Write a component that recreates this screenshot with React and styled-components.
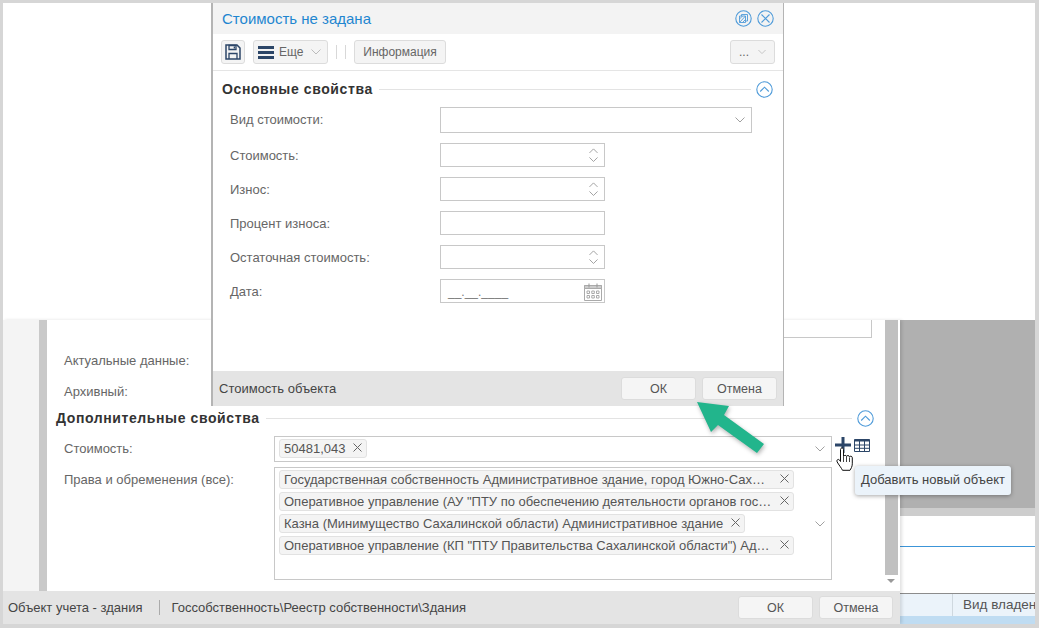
import styled, { createGlobalStyle } from "styled-components";

const GlobalStyle = createGlobalStyle`
  html, body {
    margin: 0;
    padding: 0;
    background: #fff;
  }
  body {
    font-family: "Liberation Sans", Arial, sans-serif;
    font-size: 13px;
    color: #555;
  }
`;

const Frame = styled.div`
  position: relative;
  box-sizing: border-box;
  width: 1039px;
  height: 628px;
  overflow: hidden;
  background: #fff;
  border: solid #d6d6d6;
  border-width: 3px 4px 4px 3px;
`;

const TopBlank = styled.div`
  height: 317px;
`;

const Lower = styled.div`
  display: flex;
  height: 304px;
`;

const LeftPane = styled.div`
  position: relative;
  z-index: 1;
  display: flex;
  flex-direction: column;
  width: 897px;
  box-shadow: 2px 0 3px rgba(0, 0, 0, 0.12);
`;

const PaneBody = styled.div`
  display: flex;
  flex: 1;
  min-height: 0;
`;

const Gutter = styled.div`
  width: 36px;
  background: #f4f4f4;
`;

const Band = styled.div`
  width: 8px;
  background: #c9c9c9;
`;

const Form = styled.div`
  flex: 1;
  background: #fff;
`;

const ClippedBox = styled.div`
  box-sizing: border-box;
  width: 598px;
  height: 18px;
  margin-left: 227px;
  border: solid #c8c8c8;
  border-width: 0 1px 1px 0;
`;

const PlainRow = styled.div`
  height: ${(p) => p.$h}px;
  margin-top: ${(p) => p.$top || 0}px;
  padding-left: 17px;
  line-height: ${(p) => p.$line || p.$h}px;
  color: #666;
`;

const SectionHead = styled.div`
  display: flex;
  align-items: center;
  height: 24px;
  padding: 0 ${(p) => p.$right}px 0 ${(p) => p.$left}px;
`;

const SectionTitle = styled.span`
  font-size: 14px;
  font-weight: bold;
  letter-spacing: 0.6px;
  color: #333;
  white-space: nowrap;
`;

const SectionLine = styled.span`
  flex: 1;
  height: 1px;
  margin: 0 5px 0 6px;
  background: #e3e3e3;
`;

const FieldRow = styled.div`
  display: flex;
  margin-top: ${(p) => p.$top}px;
`;

const FieldLabel = styled.div`
  width: 210px;
  padding: ${(p) => p.$pad}px 0 0 17px;
  color: #666;
`;

const TagBox = styled.div`
  position: relative;
  box-sizing: border-box;
  width: 558px;
  height: ${(p) => p.$h}px;
  padding: ${(p) => p.$pad}px 4px;
  border: 1px solid #c8c8c8;
  background: #fff;
`;

const Tag = styled.div`
  display: flex;
  align-items: center;
  justify-content: space-between;
  box-sizing: border-box;
  width: ${(p) => p.$w}px;
  height: 19px;
  margin-bottom: 3px;
  padding: 0 4px;
  background: #f4f4f4;
  border: 1px solid #e2e2e2;
  border-radius: 3px;
  color: #555;
  white-space: nowrap;
  svg {
    flex: none;
    margin-top: -3px;
  }
`;

const BoxChevron = styled.span`
  position: absolute;
  right: 6px;
  top: ${(p) => p.$top}px;
  line-height: 0;
`;

const Tools = styled.div`
  display: flex;
  gap: 3px;
  margin: 1px 0 0 3px;
  align-items: flex-start;
`;

const TableSlot = styled.span`
  margin-top: 2px;
`;

const Scrollbar = styled.div`
  position: relative;
  width: 16px;
  background: #fff;
`;

const Thumb = styled.div`
  width: 13px;
  height: 255px;
  margin-left: 1px;
  background: #c0c0c0;
`;

const ScrollArrow = styled.div`
  position: absolute;
  left: 3px;
  top: 259px;
  width: 0;
  height: 0;
  border: 4px solid transparent;
  border-top: 4px solid #999;
`;

const Footer = styled.div`
  display: flex;
  align-items: center;
  justify-content: space-between;
  flex: none;
  height: ${(p) => p.$h}px;
  padding: 0 ${(p) => p.$right}px 0 ${(p) => p.$left}px;
  background: #e4e4e4;
  color: #444;
`;

const FooterText = styled.div`
  display: flex;
  align-items: center;
`;

const FooterDivider = styled.span`
  width: 1px;
  height: 15px;
  margin: 0 12px 0 16px;
  background: #aaa;
`;

const FooterButtons = styled.div`
  display: flex;
  gap: 6px;
`;

const Button = styled.button`
  box-sizing: border-box;
  width: ${(p) => p.$w}px;
  height: 23px;
  padding: 0;
  font: inherit;
  font-size: 12.5px;
  color: #555;
  background: #f5f5f5;
  border: 1px solid #dcdcdc;
  border-radius: 3px;
`;

const RightPane = styled.div`
  flex: 1;
  display: flex;
  flex-direction: column;
  min-width: 0;
`;

const GrayArea = styled.div`
  height: 188px;
  background: #b0b0b0;
`;

const Splitter = styled.div`
  height: 8px;
  background: #cdcdcd;
`;

const GridTop = styled.div`
  height: 30px;
  background: #fff;
  border-bottom: 1px solid #3c95d8;
`;

const GridGap = styled.div`
  height: 46px;
  background: #fff;
  border-bottom: 1px solid #8c8c8c;
`;

const GridHead = styled.div`
  display: flex;
  height: 22px;
  background: #ebf3fa;
`;

const GridCell = styled.div`
  width: ${(p) => p.$w}px;
  flex: none;
  padding-left: 10px;
  box-sizing: border-box;
  line-height: 21px;
  font-size: 13.5px;
  color: #555;
  white-space: nowrap;
  border-right: ${(p) => (p.$edge ? "1px solid #cfd8df" : "none")};
`;

const GridSelected = styled.div`
  flex: 1;
  background: #bfdcf2;
`;

const Modal = styled.div`
  position: absolute;
  z-index: 2;
  left: 208px;
  top: 0;
  box-sizing: border-box;
  display: flex;
  flex-direction: column;
  width: 573px;
  height: 403px;
  background: #fff;
  border: solid #b4b4b4;
  border-width: 0 1px 0 2px;
`;

const TitleBar = styled.div`
  display: flex;
  align-items: center;
  justify-content: space-between;
  height: 31px;
  padding: 0 9px;
  background: #f3f3f3;
`;

const Title = styled.div`
  font-size: 15px;
  color: #1f86d0;
`;

const TitleIcons = styled.div`
  display: flex;
  gap: 5px;
  line-height: 0;
`;

const Toolbar = styled.div`
  display: flex;
  align-items: center;
  height: 36px;
  padding: 0 8px;
  border-bottom: 1px solid #e5e5e5;
`;

const ToolButton = styled.div`
  display: flex;
  align-items: center;
  justify-content: ${(p) => (p.$center ? "center" : "flex-start")};
  gap: ${(p) => p.$gap || 0}px;
  box-sizing: border-box;
  width: ${(p) => p.$w}px;
  height: 24px;
  margin-left: ${(p) => p.$ml || 0}px;
  padding: 0 ${(p) => p.$pad || 0}px;
  background: #f4f4f4;
  border: 1px solid #dcdcdc;
  border-radius: 3px;
  font-size: 12px;
  color: #666;
`;

const ToolChevron = styled.span`
  margin-left: 3px;
  line-height: 0;
`;

const ToolDivider = styled.span`
  width: 1px;
  height: 14px;
  margin-left: ${(p) => p.$ml}px;
  background: #d8d8d8;
`;

const Spacer = styled.div`
  flex: 1;
`;

const ModalBody = styled.div`
  flex: 1;
  padding-top: 6px;
`;

const ModalRow = styled.div`
  display: flex;
  align-items: center;
  height: ${(p) => p.$h || 24}px;
  margin-top: ${(p) => p.$top}px;
  padding-left: 17px;
`;

const ModalLabel = styled.div`
  width: 210px;
  padding-bottom: ${(p) => p.$lift || 0}px;
  color: #666;
`;

const Input = styled.div`
  position: relative;
  box-sizing: border-box;
  width: ${(p) => p.$w}px;
  height: ${(p) => p.$h || 24}px;
  padding-left: 7px;
  border: 1px solid #c8c8c8;
  background: #fff;
  color: #777;
  line-height: 25px;
  font-size: 12px;
`;

const Stepper = styled.span`
  position: absolute;
  right: 6px;
  top: 4px;
  display: flex;
  flex-direction: column;
  gap: 4px;
  line-height: 0;
`;

const CalendarSlot = styled.span`
  position: absolute;
  right: 2px;
  top: 3px;
  line-height: 0;
`;

const Arrow = styled.svg`
  position: absolute;
  z-index: 3;
  left: 690px;
  top: 394px;
  filter: drop-shadow(1px 2px 2px rgba(0, 0, 0, 0.3));
`;

const Cursor = styled.svg`
  position: absolute;
  z-index: 4;
  left: 833px;
  top: 444px;
`;

const Tip = styled.div`
  position: absolute;
  z-index: 4;
  left: 852px;
  top: 463px;
  box-sizing: border-box;
  width: 156px;
  height: 29px;
  padding-left: 6px;
  line-height: 28px;
  background: #ebf3fa;
  border-radius: 3px;
  box-shadow: 0 1px 4px rgba(0, 0, 0, 0.35);
  color: #444;
  white-space: nowrap;
`;

const Chevron = ({ up, size = 10, color = "#a0a0a0" }) => (
  <svg width={size} height={size * 0.6} viewBox="0 0 10 6" fill="none">
    <path d={up ? "M.5 5.5 5 1l4.5 4.5" : "M.5.5 5 5 9.5.5"} stroke={color} strokeWidth="1" />
  </svg>
);

const Cross = ({ size = 9 }) => (
  <svg width={size} height={size} viewBox="0 0 9 9" fill="none">
    <path d="M.5.5l8 8M8.5.5l-8 8" stroke="#666" strokeWidth="1" />
  </svg>
);

const CircleUp = () => (
  <svg width="17" height="17" viewBox="0 0 17 17" fill="none">
    <circle cx="8.5" cy="8.5" r="7.7" stroke="#4f9bd9" strokeWidth="1.1" />
    <path d="M4.2 10.5 8.5 6.2l4.3 4.3" stroke="#4f9bd9" strokeWidth="1.1" />
  </svg>
);

const CircleClose = () => (
  <svg width="17" height="17" viewBox="0 0 17 17" fill="none">
    <circle cx="8.5" cy="8.5" r="7.7" stroke="#4f9bd9" strokeWidth="1.1" />
    <path d="M4.5 4.5l8 8M12.5 4.5l-8 8" stroke="#4f9bd9" strokeWidth="1.1" />
  </svg>
);

const CircleWindow = () => (
  <svg width="17" height="17" viewBox="0 0 17 17" fill="none">
    <circle cx="8.5" cy="8.5" r="7.7" stroke="#4f9bd9" strokeWidth="1.1" />
    <path d="M4.5 6h6v6.500h-6zM6.500 6V4.500h6V11h-2M4.500 12.500l6-6.500M4.500 9l3-3M7.500 12.500l3-3" stroke="#4f9bd9" strokeWidth=".9" />
  </svg>
);

const SaveIcon = () => (
  <svg width="16" height="16" viewBox="0 0 16 16" fill="none">
    <path d="M1 1h11l3 3v11H1z" stroke="#2c4668" strokeWidth="1.5" fill="#f4f4f4" />
    <path d="M4 1.500h7v4H4zM4 15V9.500h8V15" stroke="#2c4668" strokeWidth="1.3" />
    <path d="M8.700 2.500H10v2H8.700z" fill="#2c4668" />
  </svg>
);

const MenuIcon = () => (
  <svg width="16" height="13" viewBox="0 0 16 13">
    <path d="M0 0h16v3H0zM0 5h16v3H0zM0 10h16v3H0z" fill="#2c4668" />
  </svg>
);

const PlusIcon = () => (
  <svg width="16" height="16" viewBox="0 0 16 16">
    <path d="M6.500 0h3v6.500H16v3H9.500V16h-3V9.500H0v-3h6.500z" fill="#2c4668" />
  </svg>
);

const TableIcon = () => (
  <svg width="16" height="13" viewBox="0 0 16 13" fill="none">
    <path d="M.5.500h15v12H.5z" stroke="#2c4668" />
    <path d="M.5 1.500h15" stroke="#2c4668" strokeWidth="2" />
    <path d="M.5 6h15M.5 9.300h15M5.500 2v10.500M10.500 2v10.500" stroke="#2c4668" />
  </svg>
);

const CalendarIcon = () => (
  <svg width="18" height="18" viewBox="0 0 18 18" fill="none">
    <path d="M.5 2.500h17v15H.5z" stroke="#aaa" fill="#fff" />
    <path d="M.5 2.500h17v3H.5z" fill="#ccc" stroke="#aaa" />
    <path d="M5 .5v4M13 .5v4" stroke="#999" />
    <path d="M3 8h2.500v2.500H3zM7.800 8h2.500v2.500H7.800zM12.500 8H15v2.500h-2.500zM3 12.500h2.500V15H3zM7.800 12.500h2.500V15H7.800zM12.500 12.500H15V15h-2.500z" stroke="#aaa" />
  </svg>
);

const StepControl = () => (
  <Stepper>
    <Chevron up size={9} color="#999" />
    <Chevron size={9} color="#999" />
  </Stepper>
);

const rights = [
  { w: 515, text: "Государственная собственность Административное здание, город Южно-Сах…" },
  { w: 515, text: "Оперативное управление (АУ \"ПТУ по обеспечению деятельности органов гос…" },
  { w: 466, text: "Казна (Минимущество Сахалинской области) Административное здание" },
  { w: 515, text: "Оперативное управление (КП \"ПТУ Правительства Сахалинской области\") Ад…" },
];

const modalFields = [
  { label: "Стоимость:", step: true },
  { label: "Износ:", step: true },
  { label: "Процент износа:" },
  { label: "Остаточная стоимость:", step: true },
];

export default function App() {
  return (
    <>
      <GlobalStyle />
      <Frame>
        <TopBlank />
        <Lower>
          <LeftPane>
            <PaneBody>
              <Gutter />
              <Band />
              <Form>
                <ClippedBox />
                <PlainRow $h={31} $top={7}>Актуальные данные:</PlainRow>
                <PlainRow $h={30} $line={31}>Архивный:</PlainRow>
                <SectionHead $left={9} $right={10}>
                  <SectionTitle>Дополнительные свойства</SectionTitle>
                  <SectionLine />
                  <CircleUp />
                </SectionHead>
                <FieldRow $top={6}>
                  <FieldLabel $pad={5}>Стоимость:</FieldLabel>
                  <TagBox $h={26} $pad={2}>
                    <Tag $w={88}>
                      <span>50481,043</span>
                      <Cross />
                    </Tag>
                    <BoxChevron $top={9}><Chevron /></BoxChevron>
                  </TagBox>
                  <Tools>
                    <PlusIcon />
                    <TableSlot><TableIcon /></TableSlot>
                  </Tools>
                </FieldRow>
                <FieldRow $top={5}>
                  <FieldLabel $pad={5}>Права и обременения (все):</FieldLabel>
                  <TagBox $h={113} $pad={2}>
                    {rights.map((r) => (
                      <Tag key={r.text} $w={r.w}>
                        <span>{r.text}</span>
                        <Cross />
                      </Tag>
                    ))}
                    <BoxChevron $top={53}><Chevron /></BoxChevron>
                  </TagBox>
                </FieldRow>
              </Form>
              <Scrollbar>
                <Thumb />
                <ScrollArrow />
              </Scrollbar>
            </PaneBody>
            <Footer $h={33} $left={5} $right={7}>
              <FooterText>
                Объект учета - здания
                <FooterDivider />
                Госсобственность\Реестр собственности\Здания
              </FooterText>
              <FooterButtons>
                <Button $w={75}>ОК</Button>
                <Button $w={74}>Отмена</Button>
              </FooterButtons>
            </Footer>
          </LeftPane>
          <RightPane>
            <GrayArea />
            <Splitter />
            <GridTop />
            <GridGap />
            <GridHead>
              <GridCell $w={53} $edge />
              <GridCell $w={85}>Вид владен</GridCell>
            </GridHead>
            <GridSelected />
          </RightPane>
        </Lower>

        <Modal>
          <TitleBar>
            <Title>Стоимость не задана</Title>
            <TitleIcons>
              <CircleWindow />
              <CircleClose />
            </TitleIcons>
          </TitleBar>
          <Toolbar>
            <ToolButton $w={24} $center><SaveIcon /></ToolButton>
            <ToolButton $w={75} $ml={8} $pad={4} $gap={5}>
              <MenuIcon />
              Еще
              <ToolChevron><Chevron color="#bbb" /></ToolChevron>
            </ToolButton>
            <ToolDivider $ml={8} />
            <ToolDivider $ml={8} />
            <ToolButton $w={92} $ml={8} $center>Информация</ToolButton>
            <Spacer />
            <ToolButton $w={45} $pad={8} $gap={9}>
              ...
              <Chevron color="#bbb" />
            </ToolButton>
          </Toolbar>
          <ModalBody>
            <SectionHead $left={9} $right={10}>
              <SectionTitle>Основные свойства</SectionTitle>
              <SectionLine />
              <CircleUp />
            </SectionHead>
            <ModalRow $top={6} $h={26}>
              <ModalLabel $lift={2}>Вид стоимости:</ModalLabel>
              <Input $w={312} $h={26}>
                <BoxChevron $top={9}><Chevron /></BoxChevron>
              </Input>
            </ModalRow>
            {modalFields.map((f) => (
              <ModalRow key={f.label} $top={10}>
                <ModalLabel>{f.label}</ModalLabel>
                <Input $w={165}>{f.step && <StepControl />}</Input>
              </ModalRow>
            ))}
            <ModalRow $top={10}>
              <ModalLabel>Дата:</ModalLabel>
              <Input $w={165}>
                __.__.____
                <CalendarSlot><CalendarIcon /></CalendarSlot>
              </Input>
            </ModalRow>
          </ModalBody>
          <Footer $h={35} $left={6} $right={6}>
            <span>Стоимость объекта</span>
            <FooterButtons>
              <Button $w={75}>ОК</Button>
              <Button $w={75}>Отмена</Button>
            </FooterButtons>
          </Footer>
        </Modal>

        <Arrow width="80" height="60" viewBox="0 0 80 60">
          <path d="M4 5 36 9 31 18 71 47 64 56 25 28 18 35z" fill="#22b58c" />
        </Arrow>

        <Cursor width="20" height="26" viewBox="0 0 20 26">
          <path d="M4.500 2.500c0-2 3-2 3 0v7c.5-1.500 3-1.500 3 0 .3-1.300 2.800-1.300 3 .3.600-1 2.800-.8 2.800 1v6c0 3-1.500 5-2.300 6.500H6.500C5.500 21 2.500 17.500 1.200 15c-1-2 1-3.500 2.300-2l1 1.500z" fill="#fff" stroke="#111" strokeWidth="1" strokeLinejoin="round" />
          <path d="M7.500 10v5M10.500 10v5M13.500 10.500V15" stroke="#111" strokeWidth=".8" />
        </Cursor>

        <Tip>Добавить новый объект</Tip>
      </Frame>
    </>
  );
}
